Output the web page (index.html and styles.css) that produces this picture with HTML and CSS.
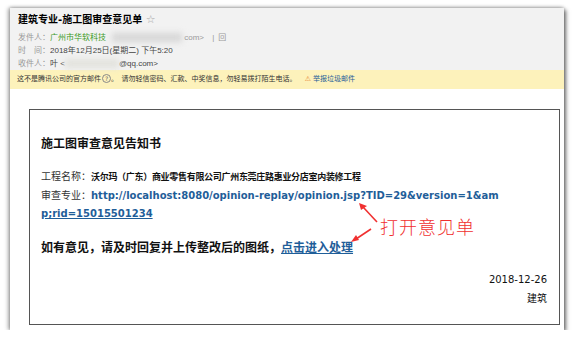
FILE: index.html
```html
<!DOCTYPE html>
<html lang="zh-CN">
<head>
    <meta charset="UTF-8">
    <title>建筑专业-施工图审查意见单</title>
    <link rel="stylesheet" href="styles.css">
</head>
<body>
    <div class="window">
        <div class="mail-head">
            <div class="subject">建筑专业-施工图审查意见单 <span class="star">☆</span></div>
            <div class="meta">
                <span class="label">发件人：</span><span class="sender">广州市华软科技</span>
                <span class="blur blur-sender"></span><span class="muted">com&gt;</span>
                <span class="muted sep">|</span><span class="muted">回</span>
            </div>
            <div class="meta">
                <span class="label">时　间：</span>2018年12月25日(星期二) 下午5:20
            </div>
            <div class="meta">
                <span class="label">收件人：</span>叶 &lt;<span class="blur blur-to"></span>@qq.com&gt;
            </div>
        </div>

        <div class="notice">
            这不是腾讯公司的官方邮件<span class="q">?</span>。　请勿轻信密码、汇款、中奖信息，勿轻易拨打陌生电话。
            <span class="bell">&#9888;</span><a href="#" class="report">举报垃圾邮件</a>
        </div>

        <div class="letter">
            <h3>施工图审查意见告知书</h3>
            <div class="line"><span class="key">工程名称：</span><b>沃尔玛（广东）商业零售有限公司广州东莞庄路惠业分店室内装修工程</b></div>
            <div class="line"><span class="key">审查专业：</span><span class="url">http://localhost:8080/opinion-replay/opinion.jsp?TID=29&amp;version=1&amp;am</span></div>
            <div class="line"><a href="#" class="url">p;rid=15015501234</a></div>
            <div class="action">如有意见，请及时回复并上传整改后的图纸，<a href="#">点击进入处理</a></div>
            <div class="sign">
                <div>2018-12-26</div>
                <div>建筑</div>
            </div>
        </div>

        <!-- 标注 -->
        <svg class="arrows" width="60" height="50" viewBox="0 0 60 50">
            <path d="M32 26 L18 11" stroke="#f03030" stroke-width="1.6" fill="none"/>
            <path d="M14 7 L22 10 L16 14 Z" fill="#f03030"/>
            <path d="M26 33 L11 43" stroke="#f03030" stroke-width="1.6" fill="none"/>
            <path d="M6 46 L11 39 L14 44 Z" fill="#f03030"/>
        </svg>
        <div class="note">打开意见单</div>
    </div>
</body>
</html>
```

FILE: styles.css
```css
body {
    margin: 0;
    background: #fff;
    font-family: "DejaVu Sans", "Noto Sans CJK SC", sans-serif;
}
.window {
    position: relative;
    width: 554px;
    height: 322px;
    margin: 8px 0 0 10px;
    background: #fff;
    box-shadow: 2px 2px 4px rgba(0,0,0,0.55), -2px 0 4px rgba(0,0,0,0.3), 0 -1px 3px rgba(0,0,0,0.15);
}
.mail-head {
    background: #f2f2f2;
    height: 62px;
    padding: 4px 8px 0;
    box-sizing: border-box;
    font-family: "Liberation Sans", "Noto Sans CJK SC", sans-serif;
    font-size: 8px;
    color: #444;
}
.subject {
    font-family: "DejaVu Sans", "Noto Sans CJK SC", sans-serif;
    font-size: 10px;
    font-weight: bold;
    color: #000;
    line-height: 16px;
    margin-bottom: 3px;
}
.star {
    color: #aaa;
    font-weight: normal;
    font-size: 11px;
}
.meta {
    line-height: 13px;
    white-space: nowrap;
}
.label {
    color: #999;
}
.sender {
    color: #3c9a1e;
}
.muted {
    color: #999;
}
.sep {
    margin: 0 4px 0 6px;
}
.blur {
    display: inline-block;
    height: 9px;
    vertical-align: middle;
    background: #d6d6d6;
    filter: blur(3px);
}
.blur-sender {
    width: 70px;
    margin: 0 2px 0 4px;
}
.blur-to {
    width: 54px;
    background: #e2e2dc;
}
.notice {
    background: #fdf2bb;
    height: 19px;
    line-height: 19px;
    padding-left: 7px;
    font-size: 7px;
    color: #333;
    white-space: nowrap;
}
.q {
    display: inline-block;
    width: 7px;
    height: 7px;
    line-height: 7px;
    border: 1px solid #888;
    border-radius: 50%;
    font-size: 6px;
    text-align: center;
    color: #666;
    margin-left: 1px;
}
.bell {
    color: #e5782a;
    margin-left: 6px;
}
.report {
    color: #1f5e99;
    text-decoration: none;
    margin-left: 2px;
}
.letter {
    margin: 20px 0 0 19px;
    width: 531px;
    height: 216px;
    box-sizing: border-box;
    border: 1px solid #555;
    padding: 0 12px 0 11px;
    color: #111;
}
.letter h3 {
    margin: 26px 0 16px;
    font-size: 12px;
    line-height: 16px;
}
.line {
    font-size: 10px;
    line-height: 18.5px;
    white-space: nowrap;
}
.key {
    color: #333;
}
.line b {
    font-weight: 600;
    font-size: 9px;
    letter-spacing: -0.3px;
}
.url {
    color: #1f5e99;
    font-weight: bold;
}
a.url {
    text-decoration: underline;
}
.action {
    margin-top: 15px;
    font-size: 12px;
    line-height: 18px;
    font-weight: bold;
}
.action a {
    color: #1f5e99;
}
.sign {
    margin-top: 13px;
    text-align: right;
    font-size: 10px;
    line-height: 19px;
}
.arrows {
    position: absolute;
    left: 335px;
    top: 188px;
}
.note {
    position: absolute;
    left: 370px;
    top: 209px;
    font-size: 18px;
    line-height: 22px;
    font-weight: 300;
    color: #f03030;
    letter-spacing: 1px;
}
```
